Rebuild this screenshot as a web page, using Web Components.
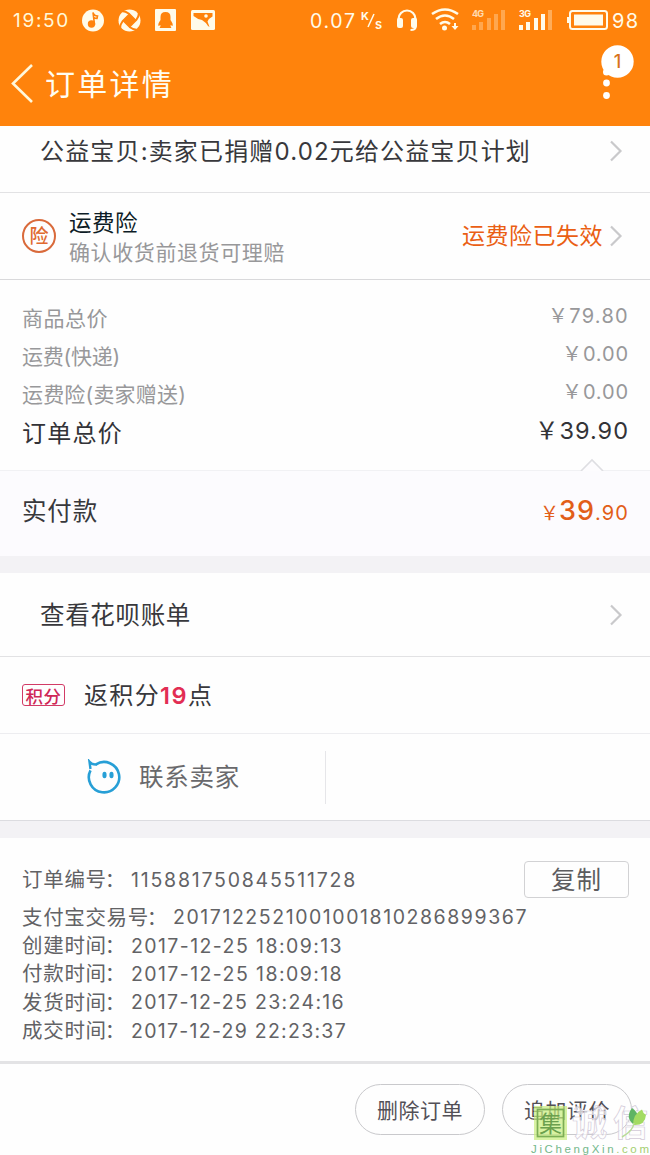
<!DOCTYPE html>
<html lang="zh-CN"><head><meta charset="utf-8"><title>订单详情</title>
<style>
html,body{margin:0;padding:0;background:#fefefe}
body{font-family:Inter,"Noto Sans CJK SC","Noto Sans",sans-serif;color:#38383c;width:650px;height:1155px;overflow:hidden}
</style></head><body>
<order-page></order-page>
<script>
const define=(name,css,html,after)=>customElements.define(name,class extends HTMLElement{
  constructor(){super();this.attachShadow({mode:'open'}).innerHTML='<style>:host{display:block;box-sizing:border-box}*{box-sizing:border-box}'+css+'</style>'+html;}
  connectedCallback(){if(after)after(this);}
});

// A single line of text tracked to a given width (w) at a given size (s).
define('fit-text',':host{display:inline-block;white-space:nowrap;flex:none;line-height:1.2;padding-top:2px}span{display:inline-block;white-space:pre}','<span><slot></slot></span>',el=>{
  const s=el.getAttribute('s'),w=+el.getAttribute('w');
  if(s)el.style.fontSize=s+'px';
  if(w){
    const sp=el.shadowRoot.querySelector('span');
    sp.style.letterSpacing='0px';
    const nodes=el.shadowRoot.querySelector('slot').assignedNodes({flatten:true});
    const n=[...nodes.map(x=>x.textContent).join('')].length||1;
    sp.style.letterSpacing=(w-sp.getBoundingClientRect().width)/n+'px';
    el.style.width=w+'px';
  }
});

define('chevron-right',':host{width:14px;height:24px;flex:none}svg{display:block}','<svg width="14" height="24" viewBox="0 0 14 24"><path d="M2 2.500 11.500 12 2 21.500" fill="none" stroke="#c9c9cb" stroke-width="2.200"/></svg>');

define('status-bar',`:host{display:flex;align-items:center;height:40px;padding-left:13px;color:#fff8d8}svg{display:block;flex:none}`,`
<fit-text s="19" w="57">19:50</fit-text>
<svg width="580" height="40" viewBox="70 0 580 40" fill="#fffbea">
<circle cx="93" cy="20.500" r="11"/><path d="M94.500 24.500 93 12.500q1 3.500 4.500 3.500l-.5 2.500q-2 0-3-1" stroke="#ff830c" stroke-width="1.600" fill="none"/><circle cx="91.500" cy="24" r="3.700" fill="#ff830c"/>
<circle cx="129.500" cy="20.500" r="11"/><path d="M129.500 14 136 20.500 129.500 27 123 20.500z" fill="#ff830c" stroke="#ff830c" stroke-width="1.500" stroke-linejoin="round"/><path d="M129.500 14q-4-3-8-3M136 20.500q3-4 3-8M129.500 27q4 3 8 3M123 20.500q-3 4-3 8" fill="none" stroke="#ff830c" stroke-width="2"/>
<rect x="155" y="9" width="21" height="22" rx="1"/><path d="M165.500 12q5 0 5 5v3q3 4 2 6l-2-1q0 2 1 3h-12q1-1 1-3l-2 1q-1-2 2-6v-3q0-5 5-5z" fill="#ff830c"/>
<rect x="191" y="10" width="24" height="20" rx="1.500"/><path d="M193.500 13h19v3.500q-4 2-5 5l2 5.500-1.500-1q-2.500-4-6-6-5-1-8.500-4z" fill="#ff830c"/><circle cx="206" cy="16" r="1.800"/>
<g><text x="310" y="27.500" font-size="19.500" textLength="45">0.07</text><text x="361" y="20" font-size="11" font-weight="700">K</text><text x="375" y="29" font-size="13" font-weight="600">s</text><text x="472" y="17" font-size="9" font-weight="700" opacity=".75" textLength="12">4G</text><text x="519" y="17" font-size="9" font-weight="700" textLength="12">3G</text><text x="612" y="27.500" font-size="20" textLength="26">98</text></g>
<path d="M368 27l6-13" stroke="#fffbea" stroke-width="1.500"/>
<path d="M398.500 22v-3a8.500 8.500 0 0 1 17 0v8q0 3-5 3" fill="none" stroke="#fffbea" stroke-width="2.200"/><rect x="397" y="18" width="6" height="10" rx="2"/><rect x="411" y="18" width="6" height="10" rx="2"/>
<path d="M432 14q13-9 26 0M436 19q9-7 18 0M440 24q5-4 10 0" fill="none" stroke="#fffbea" stroke-width="2.600"/><circle cx="444.500" cy="28" r="2.500"/><path d="M454 23h2v3h2.500l-3.500 4-3.500-4h2.500z"/>
<path opacity=".3" d="M472 25h4v5h-4zM479 22h4v8h-4zM487 18h4v12h-4zM494 14h4v16h-4zM501 10h4v20h-4z"/>
<path d="M519 25h4v5h-4zM526 22h4v8h-4zM534 18h4v12h-4zM541 14h4v16h-4z"/><path opacity=".35" d="M548 10h4v20h-4z"/>
<rect x="570" y="11" width="37" height="18" rx="2.500" fill="none" stroke="#fffbea" stroke-width="2"/><rect x="574" y="14.500" width="29" height="11"/><rect x="567" y="17" width="2" height="6"/>
</svg>`);

define('nav-bar',`:host{display:flex;align-items:center;height:86px;position:relative;padding-left:11px;color:#fffdf2}
fit-text{margin-left:12px}.menu{position:absolute;left:590px;top:0}`,`
<svg width="22" height="40" viewBox="0 0 22 40"><path d="M21 2 2 20.500 21 39" fill="none" stroke="#fff8dc" stroke-width="2.600"/></svg>
<fit-text s="30" w="129"><slot></slot></fit-text>
<svg class="menu" width="60" height="80" viewBox="590 40 60 80"><circle cx="606.500" cy="72" r="3.500" fill="#fff"/><circle cx="617.500" cy="61.500" r="16.200" fill="#fff"/><circle cx="606.500" cy="83" r="3.400" fill="#fff"/><circle cx="606.500" cy="95.500" r="3.400" fill="#fff"/><text x="617.500" y="68" font-size="18" font-weight="500" fill="#d8731c" text-anchor="middle">1</text></svg>`);

define('app-header',':host{background:#ff830c;height:126px}','<status-bar></status-bar><nav-bar>订单详情</nav-bar>');

define('link-row',':host{display:flex;align-items:center;justify-content:space-between;padding:0 27px 0 40px;border-bottom:1px solid #e2e2e4}','<slot></slot><chevron-right></chevron-right>');

define('insurance-row',`:host{display:flex;align-items:center;height:87px;padding:0 27px 0 22px;border-bottom:1px solid #d9d9db}
.i{width:34px;height:34px;border:2px solid #d96a3b;border-radius:50%;color:#e06a30;display:flex;align-items:center;justify-content:center;font-weight:500}
.t{display:flex;flex-direction:column;margin-left:13px;flex:1}.a{color:#0d1c26;height:30px;line-height:30px}.b{color:#98989a;height:30px;line-height:30px}.r{color:#ea5f14;margin-right:6px}`,`
<div class="i"><fit-text s="19">险</fit-text></div><div class="t"><fit-text class="a" s="22.500" w="69">运费险</fit-text><fit-text class="b" s="21" w="216">确认收货前退货可理赔</fit-text></div><fit-text class="r" s="23" w="141">运费险已失效</fit-text><chevron-right></chevron-right>`);

define('price-line',':host{display:flex;justify-content:space-between;height:38px;line-height:38px;color:#98989a}::slotted(:last-child){margin-top:-3px}','<slot></slot>');

define('price-list',`:host{height:191px;padding:18px 21px 0 22px;position:relative;border-bottom:1px solid #f1f1f4}price-line.total{color:#333337;height:42px}fit-text{line-height:38px}.total fit-text{line-height:40px}
svg{position:absolute;left:580px;bottom:-1px}`,`
<price-line><fit-text s="21" w="86">商品总价</fit-text><fit-text s="20" w="81">￥79.80</fit-text></price-line>
<price-line><fit-text s="21" w="98">运费(快递)</fit-text><fit-text s="20" w="67">￥0.00</fit-text></price-line>
<price-line><fit-text s="21" w="164">运费险(卖家赠送)</fit-text><fit-text s="20" w="67">￥0.00</fit-text></price-line>
<price-line class="total"><fit-text s="24" w="101">订单总价</fit-text><fit-text s="23.500" w="94">￥39.90</fit-text></price-line>
<svg width="24" height="13" viewBox="0 0 24 13"><path d="M1 13 12 2 23 13" fill="#fdfcfe" stroke="#dedee2" stroke-width="1.600"/></svg>`);

define('paid-row',`:host{display:flex;align-items:center;justify-content:space-between;height:85px;padding:0 21px 6px 22px;background:#fcfbfe}
.p{display:flex;align-items:baseline;color:#e25e18}.p .m{font-weight:500}`,`
<fit-text s="24.500" w="76">实付款</fit-text><div class="p"><fit-text s="19" w="19">￥</fit-text><fit-text class="m" s="27" w="36">39</fit-text><fit-text s="20" w="34">.90</fit-text></div>`);

define('section-gap',':host{height:17px;background:#f3f2f5}','');

define('points-row',`:host{display:flex;align-items:center;height:77px;padding:0 22px 0 22px;border-bottom:1px solid #ededf0}
.tag{width:43px;height:22px;border:1px solid #d23b66;border-radius:3px;color:#cf2757;display:flex;align-items:center;justify-content:center;font-weight:500;margin-right:19px}
b{font-weight:600;color:#e22d53}`,`
<div class="tag"><fit-text s="17.500" w="36">积分</fit-text></div><fit-text s="24" w="76">返积分</fit-text><fit-text s="23.500" w="28"><b>19</b></fit-text><fit-text s="24">点</fit-text>`);

define('contact-row',`:host{display:flex;height:87px;align-items:center;border-bottom:1px solid #dcdce0;color:#69696c}
.l{width:326px;height:53px;border-right:1px solid #e6e6e9;display:flex;align-items:center;padding-left:85px}fit-text{margin-left:17px}`,`
<div class="l"><svg width="37" height="37" viewBox="85 759 37 37"><path d="M96 764.300A15.200 15.200 0 1 1 90.500 770.300" fill="none" stroke="#279fd6" stroke-width="2.600"/><path d="M90.500 769 89.500 761.800Q92 765 97 764.500" fill="none" stroke="#279fd6" stroke-width="2.400"/><ellipse cx="104.500" cy="775" rx="2.100" ry="3.200" fill="#279fd6"/><ellipse cx="111.500" cy="775" rx="2.100" ry="3.200" fill="#279fd6"/></svg><fit-text s="24.500" w="101">联系卖家</fit-text></div>`);

define('info-line',':host{display:flex;align-items:center;gap:3px;height:28.300px;color:#626265}','<slot></slot>');
define('order-info',`:host{height:226px;padding:23px 21px 0 22px;border-bottom:3px solid #e3e3e5}
i{font-style:normal;margin:0 2px 0 -2px}
.top{display:flex;justify-content:space-between;align-items:center;height:37px;margin-bottom:5px}
.copy{width:105px;height:37px;border:1.500px solid #d2d2d4;border-radius:4px;display:flex;align-items:center;justify-content:center;color:#5c5c5f}`,`
<div class="top"><info-line><fit-text s="20.500" w="106">订单编号<i>：</i></fit-text><fit-text s="19.500" w="226">115881750845511728</fit-text></info-line><div class="copy"><fit-text s="24.500" w="51">复制</fit-text></div></div>
<info-line><fit-text s="20.500" w="148">支付宝交易号<i>：</i></fit-text><fit-text s="19.500" w="355">2017122521001001810286899367</fit-text></info-line>
<info-line><fit-text s="20.500" w="106">创建时间<i>：</i></fit-text><fit-text s="19.500" w="212">2017-12-25 18:09:13</fit-text></info-line>
<info-line><fit-text s="20.500" w="106">付款时间<i>：</i></fit-text><fit-text s="19.500" w="212">2017-12-25 18:09:18</fit-text></info-line>
<info-line><fit-text s="20.500" w="106">发货时间<i>：</i></fit-text><fit-text s="19.500" w="214">2017-12-25 23:24:16</fit-text></info-line>
<info-line><fit-text s="20.500" w="106">成交时间<i>：</i></fit-text><fit-text s="19.500" w="216">2017-12-29 22:23:37</fit-text></info-line>`);

define('pill-button',':host{display:flex;align-items:center;justify-content:center;width:130px;height:51px;border:1px solid #c9c9cc;border-radius:26px;color:#535057}','<fit-text s="21" w="86"><slot></slot></fit-text>');
define('site-mark',':host{position:absolute;left:526px;top:36px;width:124px;height:56px}svg{display:block}',`
<svg width="124" height="56" viewBox="526 1100 124 56" font-family="Noto Sans CJK SC,sans-serif">
<rect x="534" y="1106" width="33" height="34" fill="#c8ec7c" opacity=".7"/><rect x="537.500" y="1109.500" width="26" height="27" fill="none" stroke="#7cae55" stroke-width="1.700"/><text x="539" y="1131.500" font-size="23" fill="#6ba04e">集</text>
<g font-size="35" font-weight="700" fill="#fff" fill-opacity=".7" stroke="#d3cbd9" stroke-width=".7"><text x="572" y="1136">诚</text><text x="613" y="1136">信</text></g>
<path d="M632 1108q-7 9 1 16 10-8-1-16z" fill="#5fb463"/><path d="M633 1125q0-11 9-15.500 1 4 4 5.500-1 11-13 10z" fill="#a3db62"/><path d="M634 1123q-1 8-12 14" fill="none" stroke="#b9dc98" stroke-width="1.500"/>
<text x="531" y="1153" font-size="11.500" font-family="Liberation Sans,sans-serif" fill="#74b88b" textLength="118">JiChengXin<tspan fill="#a3cf70">.com</tspan></text></svg>`);
define('action-bar',':host{display:flex;position:relative;height:91px;padding:20px 18px 0;justify-content:flex-end;gap:17px}','<pill-button>删除订单</pill-button><pill-button>追加评价</pill-button><site-mark></site-mark>');

define('order-page',`:host{width:650px;height:1155px;overflow:hidden;background:#fefefe}.d{height:67px;padding-bottom:16px}.h{height:84px}`,`
<app-header></app-header>
<link-row class="d"><fit-text s="24" w="491">公益宝贝:卖家已捐赠0.02元给公益宝贝计划</fit-text></link-row>
<insurance-row></insurance-row><price-list></price-list><paid-row></paid-row><section-gap></section-gap>
<link-row class="h"><fit-text s="24.500" w="151">查看花呗账单</fit-text></link-row>
<points-row></points-row><contact-row></contact-row><section-gap></section-gap><order-info></order-info><action-bar></action-bar>`);
</script></body></html>
